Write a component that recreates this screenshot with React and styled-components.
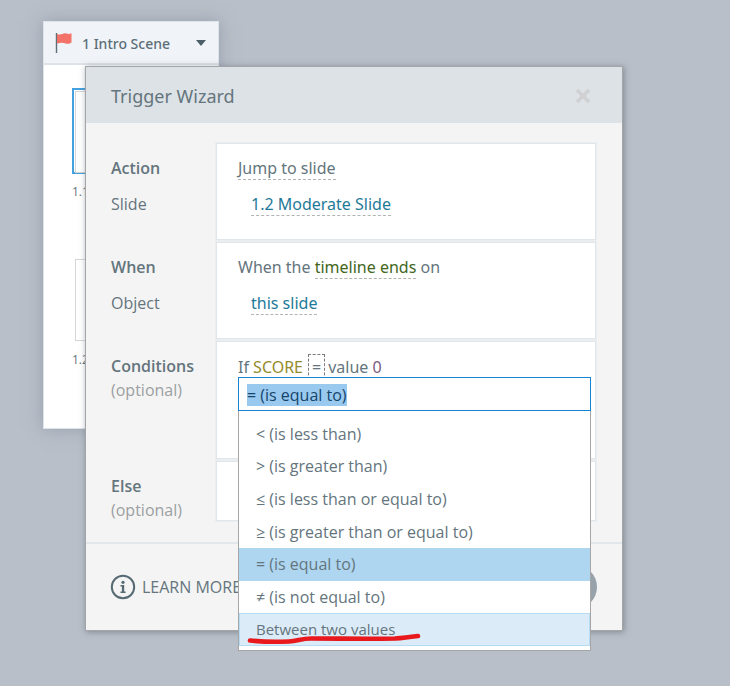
import React, { useEffect, useRef, useState } from "react";
import styled, { createGlobalStyle } from "styled-components";

const OPERATORS = [
  "< (is less than)",
  "> (is greater than)",
  "≤ (is less than or equal to)",
  "≥ (is greater than or equal to)",
  "= (is equal to)",
  "≠ (is not equal to)",
  "Between two values",
];

export default function App() {
  const [operator, setOperator] = useState("= (is equal to)");
  const inputRef = useRef(null);

  useEffect(() => {
    inputRef.current.focus();
    inputRef.current.select();
  }, []);

  return (
    <>
      <GlobalStyle />
      <Page>
        <ScenePanel>
          <SceneHeader>
            <Flag viewBox="0 0 18 22" aria-hidden="true">
              <path d="M1.5 1V21" stroke="#5d6f78" strokeWidth="1.4" />
              <path
                d="M2 2C4 3 6 2.6 8 1.8S10 1 11.500 1.500S14 2.300 16.500 1.200V10.500C14.500 12 12 12 10 11.200S5 10.500 2 11.500Z"
                fill="#f37368"
              />
            </Flag>
            <SceneSelect aria-label="Scene">
              <option>1 Intro Scene</option>
            </SceneSelect>
            <Caret viewBox="0 0 10 6" aria-hidden="true">
              <path d="M0 0H10L5 6Z" fill="#4c5f68" />
            </Caret>
          </SceneHeader>
          <Slides>
            <Slide>
              <Thumb $selected />
              <SlideName>1.1</SlideName>
            </Slide>
            <Slide>
              <Thumb />
              <SlideName>1.2</SlideName>
            </Slide>
          </Slides>
        </ScenePanel>

        <Overlay>
          <Dialog role="dialog" aria-labelledby="wizard-title">
            <DialogHeader>
              <Title id="wizard-title">Trigger Wizard</Title>
              <CloseButton aria-label="Close">
                <svg width="16" height="16" viewBox="0 0 16 16">
                  <path
                    d="M2 2L14 14M14 2L2 14"
                    stroke="#d0d1d2"
                    strokeWidth="3.6"
                  />
                </svg>
              </CloseButton>
            </DialogHeader>

            <Body>
              <Labels>
                <Name>Action</Name>
                <Line $gap>Slide</Line>
              </Labels>
              <Card>
                <Line>
                  <Token>Jump to slide</Token>
                </Line>
                <Line $gap $indent>
                  <Token $color="#1f7a99">1.2 Moderate Slide</Token>
                </Line>
              </Card>

              <Labels>
                <Name>When</Name>
                <Line $gap>Object</Line>
              </Labels>
              <Card>
                <Line>
                  When the <Token $color="#42661c">timeline ends</Token> on
                </Line>
                <Line $gap $indent>
                  <Token $color="#1f7a99">this slide</Token>
                </Line>
              </Card>

              <Labels>
                <Name>Conditions</Name>
                <Optional>(optional)</Optional>
              </Labels>
              <Card $tall>
                <Line>
                  If <Token $color="#948c2c">SCORE</Token>
                  <OperatorToken>=</OperatorToken>
                  <Token>value</Token> <Token $color="#7c5a7e">0</Token>
                </Line>
                <Menu>
                  <ComboInput
                    ref={inputRef}
                    aria-label="Operator"
                    value={operator}
                    onChange={(e) => setOperator(e.target.value)}
                  />
                  <Options role="listbox">
                    {OPERATORS.map((item) => (
                      <Option
                        key={item}
                        role="option"
                        aria-selected={item === operator}
                        $hovered={item === "Between two values"}
                        onClick={() => setOperator(item)}
                      >
                        {item}
                        {item === "Between two values" && (
                          <Underline viewBox="0 0 174 12" aria-hidden="true">
                            <path
                              d="M3 7.500C16 9 30 9 42 8.500C51 8 54 5.500 64 5.500C92 5.500 122 6 148 5.500C156 5 164 4 171 3"
                              fill="none"
                              stroke="#e8181c"
                              strokeWidth="4.600"
                              strokeLinecap="round"
                            />
                          </Underline>
                        )}
                      </Option>
                    ))}
                  </Options>
                </Menu>
              </Card>

              <Labels>
                <Name>Else</Name>
                <Optional>(optional)</Optional>
              </Labels>
              <Card $short />
            </Body>

            <DialogFooter>
              <LearnMore href="#learn">
                <svg width="26" height="26" viewBox="0 0 26 26" aria-hidden="true">
                  <circle cx="13" cy="13" r="11.2" fill="none" stroke="#566a73" strokeWidth="2" />
                  <circle cx="13" cy="8.300" r="1.600" fill="#566a73" />
                  <path d="M10.500 11H14.200V17.600H15.600V19H10.500V17.600H11.900V12.400H10.500Z" fill="#566a73" />
                </svg>
                LEARN MORE
              </LearnMore>
              <RoundButton aria-label="OK" />
            </DialogFooter>
          </Dialog>
        </Overlay>
      </Page>
    </>
  );
}

const GlobalStyle = createGlobalStyle`
  * {
    box-sizing: border-box;
  }
  body {
    margin: 0;
    background: #b8bfc8;
    color: #64757d;
    font-family: "Open Sans", "Noto Sans", sans-serif;
    font-size: 16px;
    line-height: 24px;
  }
  button, input, select {
    font: inherit;
    color: inherit;
  }
`;

const Page = styled.div`
  position: relative;
  min-height: 100vh;
  padding: 21px 0 0 43px;
`;

const ScenePanel = styled.section`
  width: 176px;
  padding-bottom: 56px;
  background: #fff;
  border: 1px solid #dde3e9;
  box-shadow: 0 0 16px rgba(120, 130, 150, 0.5);
`;

const SceneHeader = styled.div`
  display: flex;
  align-items: center;
  height: 43px;
  padding: 0 12px 0 11px;
  background: #f0f4f8;
  border-bottom: 2px solid #dde3e9;
`;

const Flag = styled.svg`
  width: 18px;
  height: 22px;
  flex: none;
`;

const SceneSelect = styled.select`
  flex: 1;
  min-width: 0;
  padding: 2px 0 0 5px;
  margin-left: 4px;
  appearance: none;
  background: none;
  border: 0;
  font-family: "Noto Sans", sans-serif;
  font-size: 14px;
  font-weight: 500;
  color: #5c6f78;
`;

const Caret = styled.svg`
  width: 10px;
  height: 6px;
  flex: none;
`;

const Slides = styled.div`
  display: flex;
  flex-direction: column;
  gap: 52px;
  padding: 23px 28px 0;
`;

const Slide = styled.div`
  display: flex;
  flex-direction: column;
`;

const Thumb = styled.div`
  height: 86px;
  padding: 1px;
  border: 2px solid ${(p) => (p.$selected ? "#45a0de" : "transparent")};

  &::before {
    content: "";
    display: block;
    height: 100%;
    border: 1px solid #d4d6d8;
  }
`;

const SlideName = styled.span`
  height: 30px;
  font-size: 12px;
  line-height: 36px;
`;

const Overlay = styled.div`
  position: absolute;
  top: 66px;
  left: 85px;
  right: 107px;
`;

const Dialog = styled.div`
  background: #f4f4f4;
  border: 1px solid #a3a5a8;
  box-shadow: 1px 1px 6px rgba(70, 78, 92, 0.5);
`;

const DialogHeader = styled.header`
  display: flex;
  align-items: center;
  justify-content: space-between;
  height: 56px;
  padding: 1px 31px 0 25px;
  background: #dde2e6;
`;

const Title = styled.h1`
  margin: 0;
  padding-top: 1px;
  font-family: "Noto Sans", sans-serif;
  font-size: 18px;
  font-weight: 400;
`;

const CloseButton = styled.button`
  display: flex;
  padding: 0;
  border: 0;
  background: none;
`;

const Body = styled.div`
  display: grid;
  grid-template-columns: 105px 1fr;
  row-gap: 2px;
  padding: 20px 26px 20px 25px;
`;

const Labels = styled.div`
  padding-top: 13px;
`;

const Name = styled.div`
  font-weight: 600;
`;

const Optional = styled.div`
  color: #9b9fa1;
`;

const Line = styled.div`
  height: 24px;
  margin-top: ${(p) => (p.$gap ? "12px" : "0")};
  padding-left: ${(p) => (p.$indent ? "13px" : "0")};
  white-space: nowrap;
`;

const Card = styled.div`
  position: relative;
  height: ${(p) => (p.$tall ? "118px" : p.$short ? "60px" : "97px")};
  padding: 12px 21px;
  background: #fff;
  border: 1px solid #e1e6ea;
  box-shadow: 0 0 0 1px #eaeef1;
  font-family: "Noto Sans", sans-serif;
`;

const Token = styled.button`
  padding: 0;
  border: 0;
  border-bottom: 1px dashed #b3b3b3;
  background: none;
  line-height: 22px;
  color: ${(p) => p.$color || "inherit"};
`;

const OperatorToken = styled.button`
  margin: 0 3px 0 5px;
  padding: 0 3px;
  border: 1px dashed #7b7b80;
  background: none;
  line-height: 24px;
`;

const Menu = styled.div`
  position: absolute;
  z-index: 1;
  top: 35px;
  left: 21px;
  right: 4px;
  font-family: "Open Sans", "Noto Sans", sans-serif;
`;

const ComboInput = styled.input`
  display: block;
  width: 100%;
  height: 34px;
  padding: 1px 8px 0;
  border: 1px solid #1583d8;
  outline: 0;
  background: #fff;
  color: #16456b;

  &::selection {
    background: #99c9ef;
    color: #16456b;
  }
`;

const Options = styled.ul`
  display: flex;
  flex-direction: column;
  height: 240px;
  margin: 0;
  padding: 7px 0 4px;
  list-style: none;
  background: #fff;
  border: 1px solid #a6a6a6;
  border-top: 0;
`;

const Option = styled.li`
  position: relative;
  display: flex;
  flex: 1;
  align-items: center;
  padding: 0 16px 1px;
  border: 1px solid ${(p) => (p.$hovered ? "#b5dbf5" : "transparent")};
  background: ${(p) => (p["aria-selected"] ? "#aed6f1" : p.$hovered ? "#dcebf8" : "none")};
  font-size: ${(p) => (p.$hovered ? "15px" : "16px")};
`;

const Underline = styled.svg`
  position: absolute;
  left: 7px;
  bottom: 0;
  width: 174px;
  height: 12px;
`;

const DialogFooter = styled.footer`
  display: flex;
  align-items: center;
  justify-content: space-between;
  height: 88px;
  padding: 0 25px 0 24px;
  border-top: 2px solid #e1e7ea;
`;

const LearnMore = styled.a`
  display: flex;
  align-items: center;
  gap: 6px;
  color: inherit;
  text-decoration: none;
`;

const RoundButton = styled.button`
  width: 44px;
  height: 44px;
  padding: 0;
  border: 0;
  border-radius: 50%;
  background: #98a2ab;
`;
